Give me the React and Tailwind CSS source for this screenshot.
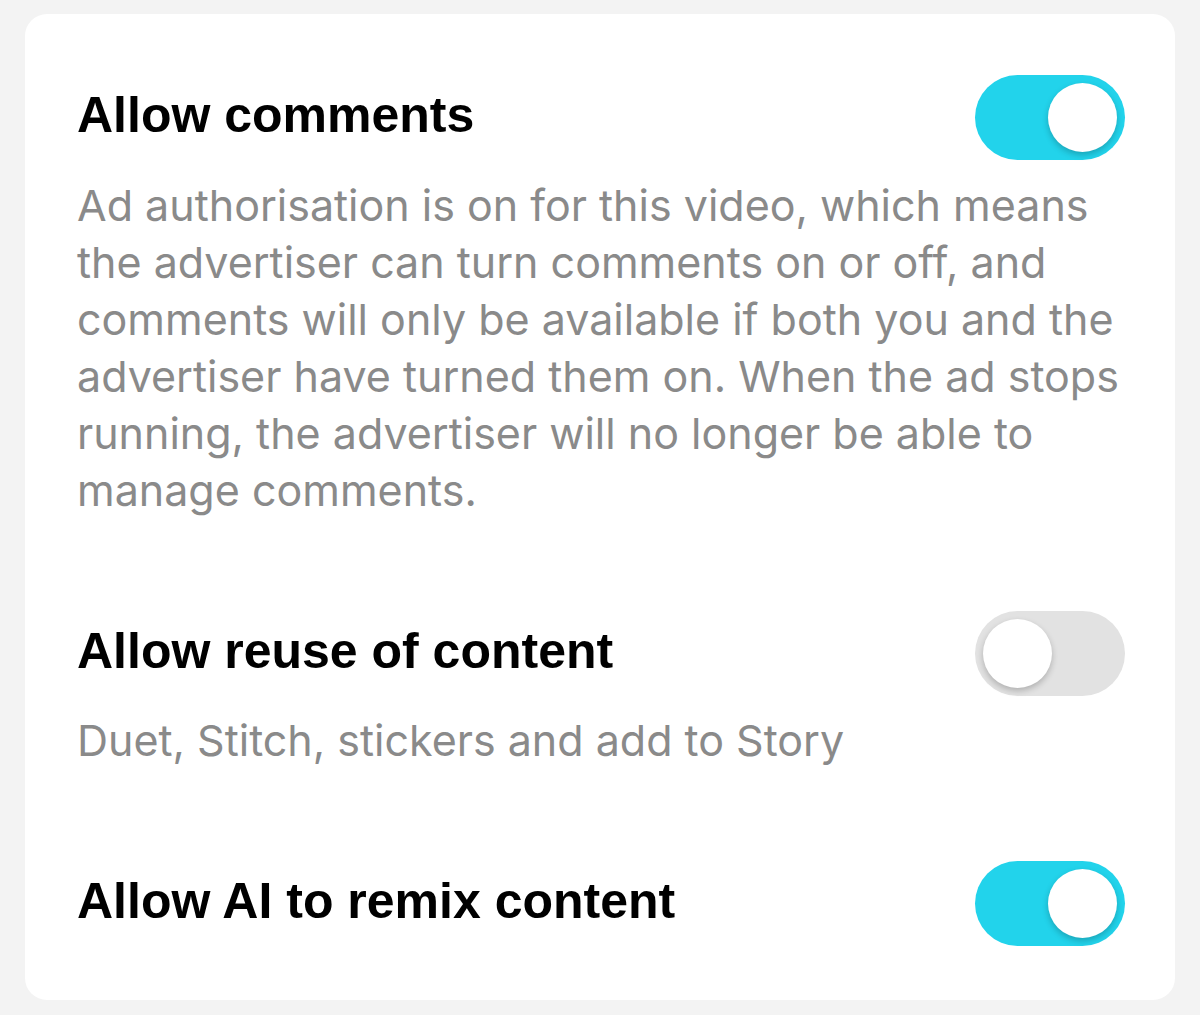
import { useState } from "react";

// one switch, cyan when on, light grey when off
function Toggle({ on, onChange }) {
  return (
    <button
      type="button"
      onClick={onChange}
      className={`relative flex h-[85px] w-[150px] shrink-0 items-center rounded-full px-[8px] ${
        on ? "justify-end bg-[#22d3eb]" : "justify-start bg-[#e2e2e2]"
      }`}
    >
      <span className="block h-[69px] w-[69px] rounded-full bg-white shadow-[0_3px_6px_rgba(0,0,0,0.22)]" />
    </button>
  );
}

function Row({ title, on, onChange }) {
  return (
    <div className="flex items-center justify-between">
      <h2 className="pb-[5px] font-['Liberation_Sans',Arial,sans-serif] text-[50px] font-bold leading-none text-black">
        {title}
      </h2>
      <Toggle on={on} onChange={onChange} />
    </div>
  );
}

const DESC =
  "Ad authorisation is on for this video, which means the advertiser can turn comments on or off, and comments will only be available if both you and the advertiser have turned them on. When the ad stops running, the advertiser will no longer be able to manage comments.";

export default function App() {
  const [opts, setOpts] = useState({ comments: true, reuse: false, ai: true });
  const flip = (k) => setOpts((o) => ({ ...o, [k]: !o[k] }));

  return (
    <div className="h-[1015px] bg-[#f3f3f3] px-[25px] pt-[14px]">
      <div className="h-[986px] rounded-[22px] bg-white pl-[52px] pr-[50px] pt-[61px] font-['Inter',sans-serif] text-[#8a8a8a]">
        <Row title="Allow comments" on={opts.comments} onChange={() => flip("comments")} />
        <p className="mt-[17px] text-[43px] leading-[57px]">{DESC}</p>

        <div className="mt-[92px]">
          <Row title="Allow reuse of content" on={opts.reuse} onChange={() => flip("reuse")} />
        </div>
        <p className="mt-[16px] text-[43px] leading-[57px]">Duet, Stitch, stickers and add to Story</p>

        <div className="mt-[92px]">
          <Row title="Allow AI to remix content" on={opts.ai} onChange={() => flip("ai")} />
        </div>
      </div>
    </div>
  );
}
